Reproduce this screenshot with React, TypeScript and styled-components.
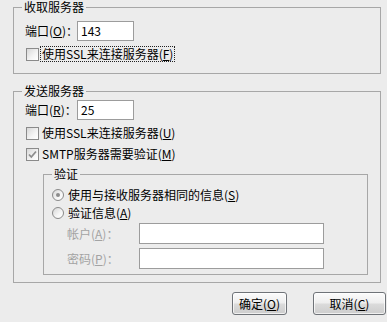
import React from 'react';
import styled, { createGlobalStyle } from 'styled-components';

const FONT = `"Noto Sans CJK SC", "Liberation Sans", sans-serif`;

const Global = createGlobalStyle`
  html, body { margin: 0; padding: 0; background: #ececec; height: 100%; }
  body {
    font-family: ${FONT};
    font-size: 12px;
    color: #000;
  }
`;

const Dialog = styled.div`
  width: 387px;
  height: 322px;
  box-sizing: border-box;
  padding: 0 6px 0 13px;
  display: flex;
  flex-direction: column;
  background: #ececec;
`;

const Group = styled.fieldset<{ $mt?: number; $ml?: number; $pt: number; $pb: number; $pl: number; $pr: number }>`
  margin: ${p => p.$mt ?? 0}px 0 0 ${p => p.$ml ?? 0}px;
  min-width: 0;
  border: 1px solid #a7a7a7;
  padding: ${p => p.$pt}px ${p => p.$pr}px ${p => p.$pb}px ${p => p.$pl}px;
  display: flex;
  flex-direction: column;
`;

const Legend = styled.legend<{ $ml?: number }>`
  margin-left: ${p => p.$ml ?? 0}px;
  padding: 0 2px;
  line-height: 14px;
  height: 14px;
  font-size: 12px;
`;

const Row = styled.div<{ $mt?: number; $h: number; $ml?: number }>`
  display: flex;
  align-items: center;
  height: ${p => p.$h}px;
  margin-top: ${p => p.$mt ?? 0}px;
  margin-left: ${p => p.$ml ?? 0}px;
  white-space: nowrap;
`;

const Label = styled.span<{ $w?: number; $disabled?: boolean }>`
  display: inline-block;
  width: ${p => (p.$w ? `${p.$w}px` : 'auto')};
  color: ${p => (p.$disabled ? '#a3a3a3' : '#000')};
  line-height: 14px;
`;

const U = styled.span`
  text-decoration: underline;
`;

const TextInput = styled.div<{ $w: number; $h: number }>`
  box-sizing: border-box;
  width: ${p => p.$w}px;
  height: ${p => p.$h}px;
  background: #fff;
  border: 1px solid #9c9c9c;
  padding: 0 3px;
  display: flex;
  align-items: center;
  font-size: 12px;
  line-height: 14px;
`;

const Box = styled.span`
  box-sizing: border-box;
  width: 13px;
  height: 13px;
  margin-left: 1px;
  margin-right: 3px;
  border: 1px solid #8a8a8a;
  background: linear-gradient(135deg, #d8d8d8 0%, #f4f4f4 60%, #ffffff 100%);
  display: flex;
  align-items: center;
  justify-content: center;
  flex: none;
`;

const Focus = styled.span`
  outline: 1px dotted #222;
  outline-offset: 0;
  padding: 0 1px;
  margin-left: -1px;
  line-height: 14px;
`;

const Radio = styled.span`
  box-sizing: border-box;
  width: 12px;
  height: 12px;
  border-radius: 50%;
  border: 1px solid #8a8a8a;
  background: linear-gradient(135deg, #d6d6d6 0%, #f6f6f6 60%, #fff 100%);
  margin-right: 4px;
  display: flex;
  align-items: center;
  justify-content: center;
  flex: none;
`;

const Dot = styled.span`
  width: 4px;
  height: 4px;
  border-radius: 50%;
  background: #8c8c8c;
`;

const Buttons = styled.div`
  display: flex;
  justify-content: flex-end;
  gap: 26px;
  margin-top: 9px;
  margin-right: -5px;
`;

const Button = styled.button<{ $w: number }>`
  box-sizing: border-box;
  width: ${p => p.$w}px;
  height: 23px;
  padding: 0;
  border: 1px solid #6f7378;
  border-radius: 3px;
  background: linear-gradient(#fbfbfb 0%, #efefef 45%, #dadada 55%, #cdcdcd 100%);
  font-family: ${FONT};
  font-size: 12px;
  line-height: 14px;
  color: #000;
  box-shadow: inset 0 0 0 1px rgba(255, 255, 255, 0.7);
`;

const Check = () => (
  <svg width="11" height="11" viewBox="0 0 11 11">
    <path d="M2 5.5 L4.3 8 L9 2.5" fill="none" stroke="#8d8d8d" strokeWidth="1.8" />
  </svg>
);

export default function App() {
  return (
    <>
      <Global />
      <Dialog>
        <Group $pt={7} $pb={12} $pl={11} $pr={12}>
          <Legend $ml={-3}>收取服务器</Legend>
          <Row $h={20}>
            <Label $w={52}>端口(<U>O</U>)：</Label>
            <TextInput $w={57} $h={20}>143</TextInput>
          </Row>
          <Row $h={14} $mt={6}>
            <Box />
            <Focus>使用SSL来连接服务器(<U>F</U>)</Focus>
          </Row>
        </Group>

        <Group $mt={10} $pt={2} $pb={7} $pl={11} $pr={12}>
          <Legend $ml={-3}>发送服务器</Legend>
          <Row $h={20}>
            <Label $w={52}>端口(<U>R</U>)：</Label>
            <TextInput $w={57} $h={20}>25</TextInput>
          </Row>
          <Row $h={14} $mt={6}>
            <Box />
            <Label>使用SSL来连接服务器(<U>U</U>)</Label>
          </Row>
          <Row $h={14} $mt={7}>
            <Box>
              <Check />
            </Box>
            <Label>SMTP服务器需要验证(<U>M</U>)</Label>
          </Row>

          <Group $mt={6} $ml={18} $pt={7} $pb={5} $pl={8} $pr={0}>
            <Legend>验证</Legend>
            <Row $h={14}>
              <Radio>
                <Dot />
              </Radio>
              <Label>使用与接收服务器相同的信息(<U>S</U>)</Label>
            </Row>
            <Row $h={14} $mt={4}>
              <Radio />
              <Label>验证信息(<U>A</U>)</Label>
            </Row>
            <Row $h={21} $mt={3} $ml={15}>
              <Label $w={72} $disabled>帐户(<U>A</U>)：</Label>
              <TextInput $w={185} $h={21} />
            </Row>
            <Row $h={21} $mt={4} $ml={15}>
              <Label $w={72} $disabled>密码(<U>P</U>)：</Label>
              <TextInput $w={185} $h={21} />
            </Row>
          </Group>
        </Group>

        <Buttons>
          <Button $w={55}>确定(<U>O</U>)</Button>
          <Button $w={73}>取消(<U>C</U>)</Button>
        </Buttons>
      </Dialog>
    </>
  );
}
